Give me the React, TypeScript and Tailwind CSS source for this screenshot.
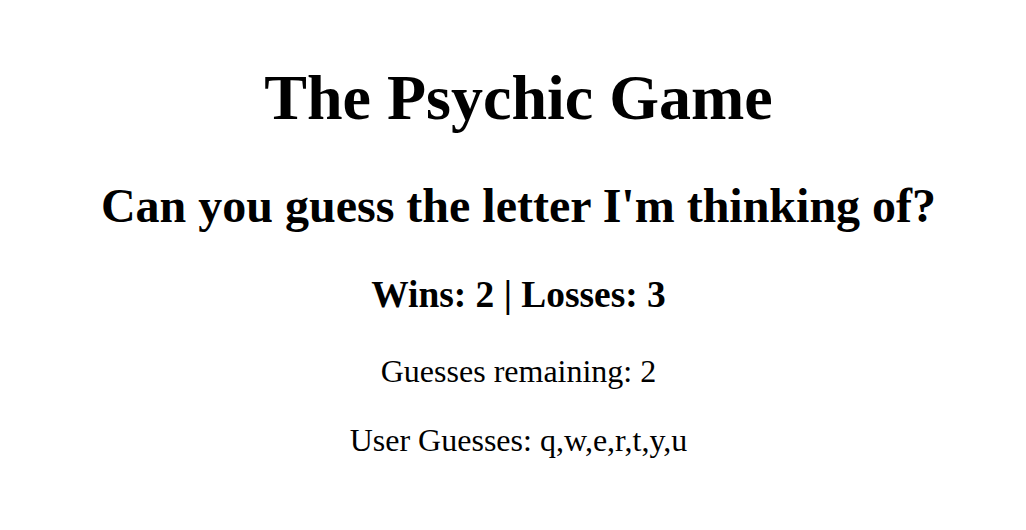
export default function App() {
  return (
    <div className="min-h-[530px] bg-white pl-[27px] pr-[16px] pt-[18px] text-center text-black font-['Liberation_Serif','Times_New_Roman',serif] leading-[normal]">
      <h1 className="mt-[42.88px] mb-[42.88px] text-[64px] font-bold leading-[normal]">The Psychic Game</h1>
      <h2 className="mt-[39.84px] mb-[39.84px] text-[48px] font-bold leading-[normal]">Can you guess the letter I'm thinking of?</h2>
      <h3 className="mt-[37.44px] mb-[37.44px] text-[37.44px] font-bold leading-[normal]">Wins: 2 | Losses: 3</h3>
      <p className="my-[32px] text-[32px] leading-[normal]">Guesses remaining: 2</p>
      <p className="my-[32px] text-[32px] leading-[normal]">User Guesses: q,w,e,r,t,y,u</p>
    </div>
  );
}
